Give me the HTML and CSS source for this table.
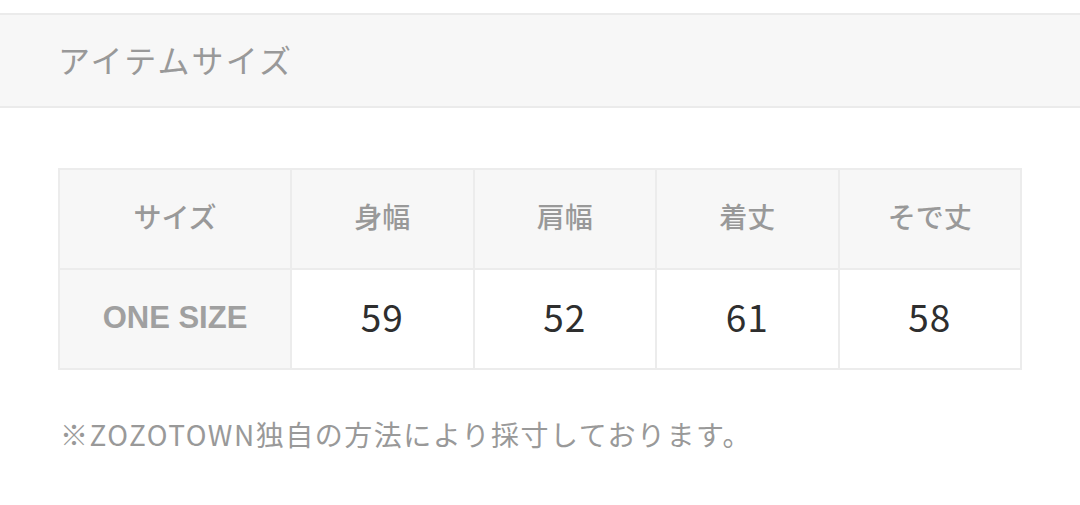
FILE: index.html
```html
<!DOCTYPE html>
<html lang="ja">
<head>
<meta charset="utf-8">
<link rel="stylesheet" href="styles.css">
</head>
<body>
<div class="page">
  <div class="heading">アイテムサイズ</div>
  <div class="content">
    <table class="size-table">
      <tr class="head-row">
        <th class="first">サイズ</th>
        <th>身幅</th>
        <th>肩幅</th>
        <th>着丈</th>
        <th>そで丈</th>
      </tr>
      <tr class="data-row">
        <th class="first size-name">ONE SIZE</th>
        <td>59</td>
        <td>52</td>
        <td>61</td>
        <td>58</td>
      </tr>
    </table>
    <p class="note">※ZOZOTOWN独自の方法により採寸しております。</p>
  </div>
</div>
</body>
</html>
```
FILE: styles.css
```css
html, body {
  margin: 0;
  padding: 0;
  background: #fff;
}
body {
  font-family: "Noto Sans CJK JP", "Noto Sans", sans-serif;
  width: 1080px;
  height: 505px;
  overflow: hidden;
}
.page {
  padding-top: 13px;
}
.heading {
  background: #f7f7f7;
  border-top: 2px solid #ebebeb;
  border-bottom: 2px solid #ebebeb;
  height: 88px;
  padding-bottom: 3px;
  box-sizing: content-box;
  padding-left: 58px;
  font-size: 32px;
  line-height: 88px;
  color: #999;
  letter-spacing: 2.2px;
}
.content {
  padding: 60px 58px 0 58px;
}
.size-table {
  border-collapse: collapse;
  width: 964px;
  table-layout: fixed;
}
.size-table th, .size-table td {
  border: 2px solid #ececec;
  text-align: center;
  height: 92px;
  padding: 0 0 6px 0;
}
.size-table th {
  background: #f7f7f7;
  color: #999;
  font-size: 28px;
  font-weight: 500;
}
.size-table .first {
  width: 230px;
}
.size-table .size-name {
  font-family: "Liberation Sans", "Noto Sans", sans-serif;
  font-size: 31px;
  font-weight: 700;
  color: #a0a0a0;
  padding-bottom: 2px;
  height: 96px;
}
.size-table td {
  background: #fff;
  color: #2e2e2e;
  font-size: 37px;
  font-weight: 400;
  letter-spacing: 1px;
}
.note {
  margin: 44px 0 0 2px;
  font-size: 28px;
  color: #999;
  line-height: 40px;
  letter-spacing: 1.5px;
}
```
